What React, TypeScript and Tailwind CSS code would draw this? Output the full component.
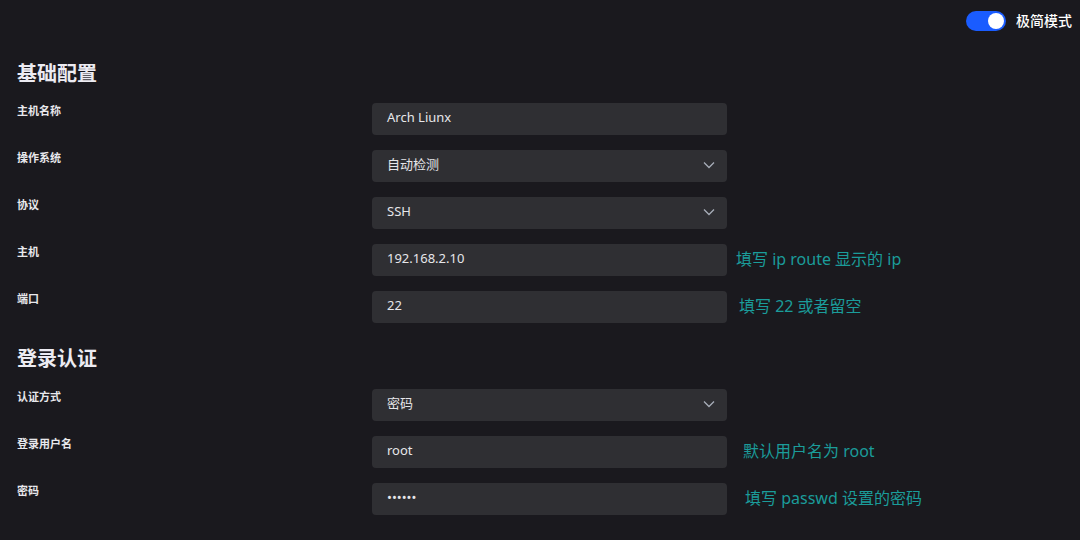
import React from "react";

const FONT = { fontFamily: '"Noto Sans", "Noto Sans CJK SC", sans-serif' };

function Chevron() {
  return (
    <svg width="12" height="8" viewBox="0 0 12 8" fill="none" className="text-[#a7adb8]">
      <path d="M1 1.5L6 6.5L11 1.5" stroke="currentColor" strokeWidth="1.3" />
    </svg>
  );
}

type RowProps = { label: string; value: string; select?: boolean; hint?: string; hintMl?: string };

function Row({ label, value, select, hint, hintMl }: RowProps) {
  return (
    <div className="flex items-start h-8">
      <div className="w-[355px] shrink-0 text-[11px] leading-4 font-bold text-[#e8e8ec]">{label}</div>
      <div className="w-[355px] h-8 shrink-0 rounded-[4px] bg-[#2f2f33] flex items-center justify-between pl-[15px] pr-[12px] pb-[2px] text-[13px] text-[#e6e6ea]">
        <span>{value}</span>
        {select && <Chevron />}
      </div>
      {hint && (
        <div className={`h-8 pb-[2px] flex items-center text-[16px] text-[#1b9c9a] ${hintMl}`}>{hint}</div>
      )}
    </div>
  );
}

export default function App() {
  return (
    <div className="w-[1080px] h-[540px] bg-[#1a191e] overflow-hidden" style={FONT}>
      <div className="flex justify-end items-center pt-[11px] pr-[8px] h-[31px]">
        <div className="w-10 h-5 rounded-full bg-[#1a5cff] flex items-center justify-end pr-[2px]">
          <div className="w-4 h-4 rounded-full bg-white" />
        </div>
        <span className="ml-[10px] text-[14px] font-medium text-white leading-5">极简模式</span>
      </div>
      <div className="px-[17px]">
        <div className="mt-[29px] h-7 leading-7 text-[20px] font-bold text-[#ecebf2]">基础配置</div>
        <div className="mt-[15px] flex flex-col gap-[15px]">
          <Row label="主机名称" value="Arch Liunx" />
          <Row label="操作系统" value="自动检测" select />
          <Row label="协议" value="SSH" select />
          <Row label="主机" value="192.168.2.10" hint="填写 ip route 显示的 ip" hintMl="ml-[9px]" />
          <Row label="端口" value="22" hint="填写 22 或者留空" hintMl="ml-[12px]" />
        </div>
        <div className="mt-[22px] h-7 leading-7 text-[20px] font-bold text-[#ecebf2]">登录认证</div>
        <div className="mt-[16px] flex flex-col gap-[15px]">
          <Row label="认证方式" value="密码" select />
          <Row label="登录用户名" value="root" hint="默认用户名为 root" hintMl="ml-[16px]" />
          <Row label="密码" value="••••••" hint="填写 passwd 设置的密码" hintMl="ml-[18px]" />
        </div>
      </div>
    </div>
  );
}
